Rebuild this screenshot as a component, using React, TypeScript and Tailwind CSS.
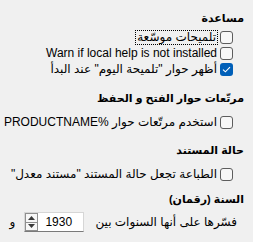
import React from 'react';

const Box: React.FC<{ checked?: boolean }> = ({ checked = false }) =>
  checked ? (
    <span className="w-[13px] h-[13px] rounded-[3px] bg-[#005fb8] flex items-center justify-center shrink-0">
      <svg width="9" height="7" viewBox="0 0 9 7">
        <path d="M1 3.6 L3.4 5.8 L8 1.2" fill="none" stroke="#fff" strokeWidth="1.1" />
      </svg>
    </span>
  ) : (
    <span className="w-[13px] h-[13px] rounded-[3px] border border-[#5d5d5d] bg-[#f7f7f7] shrink-0" />
  );

const Head: React.FC<{ children: React.ReactNode; className?: string }> = ({ children, className = '' }) => (
  <div className={`pr-[9px] h-[16px] leading-[16px] font-bold text-[11px] ${className}`}>{children}</div>
);

const Row: React.FC<{ checked?: boolean; focus?: boolean; children: React.ReactNode }> = ({ checked, focus, children }) => (
  <div className="flex items-center gap-[3px] pr-[20px] h-[16px]">
    <Box checked={checked} />
    <span className={`leading-[13px] whitespace-nowrap ${focus ? 'outline-1 outline-dotted outline-black px-[1px]' : ''}`}>
      {children}
    </span>
  </div>
);

export default function App() {
  return (
    <div
      dir="rtl"
      className="w-[253px] h-[242px] bg-[#f0f0f0] text-black text-[12px] overflow-hidden pt-[10px]"
      style={{ fontFamily: '"Liberation Sans", "DejaVu Sans", sans-serif' }}
    >
      <Head>مساعدة</Head>
      <div className="mt-[3px]">
        <Row focus>تلميحات موسّعة</Row>
        <Row>
          <span dir="ltr">Warn if local help is not installed</span>
        </Row>
        <Row checked>أظهر حوار "تلميحة اليوم" عند البدأ</Row>
      </div>

      <Head className="mt-[13px]">مرتّعات حوار الفتح و الحفظ</Head>
      <div className="mt-[8px]">
        <Row>استخدم مرتّعات حوار %PRODUCTNAME</Row>
      </div>

      <Head className="mt-[12px]">حالة المستند</Head>
      <div className="mt-[8px]">
        <Row>الطباعة تجعل حالة المستند "مستند معدل"</Row>
      </div>

      <Head className="mt-[9px]">السنة (رقمان)</Head>
      <div className="flex items-center pr-[16px] mt-[5px] h-[20px]">
        <span className="whitespace-nowrap">فسّرها على أنها السنوات بين</span>
        <div className="mr-[11px] w-[60px] h-[20px] bg-white border border-[#d6d6d6] border-b-[#7a7a7a] flex items-stretch">
          <span className="flex-1 flex items-center pl-[7px]" dir="ltr">1930</span>
          <div className="w-[13px] flex flex-col bg-[#f7f7f7] border border-[#8f8f8f]">
            <div className="flex-1 flex items-center justify-center border-b border-[#8f8f8f]">
              <svg width="7" height="4" viewBox="0 0 7 4">
                <path d="M0 4 L3.5 0 L7 4 Z" fill="#3a3a3a" />
              </svg>
            </div>
            <div className="flex-1 flex items-center justify-center">
              <svg width="7" height="4" viewBox="0 0 7 4">
                <path d="M0 0 L3.5 4 L7 0 Z" fill="#3a3a3a" />
              </svg>
            </div>
          </div>
        </div>
        <span className="mr-[9px]">و</span>
      </div>
    </div>
  );
}
